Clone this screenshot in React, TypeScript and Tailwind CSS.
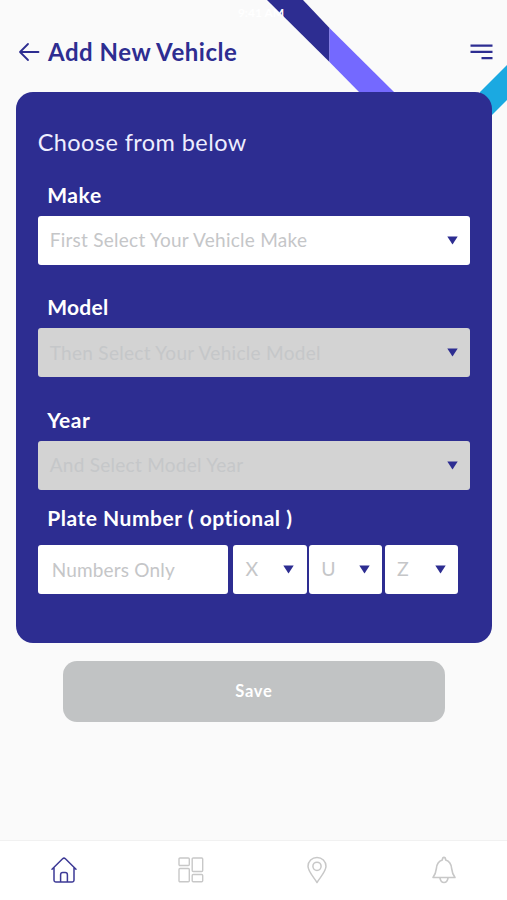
import React from "react";

function Caret() {
  return (
    <svg width="11" height="9" viewBox="0 0 11 9" className="shrink-0">
      <path d="M0.3 0.4H10.7L5.5 8.6Z" fill="#2d2d91" />
    </svg>
  );
}

function Field({ label, text, disabled, spacing, labelSpacing }: { label: string; text: string; disabled?: boolean; spacing: string; labelSpacing: string }) {
  return (
    <div className="h-[112.4px]">
      <div className={`ml-[9.5px] h-[34px] text-[21px] leading-[26px] font-bold text-white ${labelSpacing}`}>
        <span>{label}</span>
      </div>
      <div
        className={`flex h-[49px] items-center justify-between rounded-[3px] pr-3 pl-3 text-[19px] ${
          disabled ? "bg-[#d3d3d3] text-[#c5c7c9]" : "bg-white text-[#c5c6c8]"
        }`}
      >
        <span className={spacing}>{text}</span>
        <Caret />
      </div>
    </div>
  );
}

function Letter({ value }: { value: string }) {
  return (
    <div className="flex h-[49px] w-[73.2px] items-center justify-between rounded-[3px] bg-white pr-[12.5px] pl-[12px] text-[19.5px] text-[#c5c6c8]">
      <span className="pb-[3px]">{value}</span>
      <Caret />
    </div>
  );
}

export default function App() {
  return (
    <div className="relative flex h-[900px] w-[507px] flex-col overflow-hidden bg-[#fafafa] font-['Lato',sans-serif]">
      <svg width="507" height="120" className="absolute top-0 left-0">
        <path d="M267 0H303L329.5 28V62Z" fill="#2d2d91" />
        <path d="M329.5 28L395 93H360L329.5 62Z" fill="#7469ff" />
        <path d="M507 65L480 92V127L507 100Z" fill="#1ba9e1" />
      </svg>

      <div className="relative flex h-[26px] shrink-0 items-center justify-between px-4 text-[12px] font-bold text-white">
        <span className="w-[65px]" />
        <span className="mr-[26px]">9:41 AM</span>
        <span className="w-[24px]" />
      </div>

      <header className="relative flex h-[65.5px] shrink-0 items-start justify-between pr-[14.5px] pl-[18px]">
        <div className="flex h-[52px] items-center">
          <svg width="22" height="20" viewBox="0 0 22 20" fill="none" stroke="#2d2d91" strokeWidth="1.8" strokeLinecap="round" strokeLinejoin="round">
            <path d="M10 2L2 10L10 18M2 10H20.5" />
          </svg>
          <h1 className="ml-2 text-[24px] font-bold tracking-[0.52px] text-[#2d2d91]">Add New Vehicle</h1>
        </div>
        <svg width="23" height="16" viewBox="0 0 23 16" className="mt-[18px]" fill="#2d2d91">
          <path d="M0.5 0.5H22.5V2.7H0.5ZM0.5 6.8H22.5V9H0.5ZM11.5 13H22.5V15.2H11.5Z" />
        </svg>
      </header>

      <main className="relative ml-[15.7px] h-[551px] w-[476.5px] shrink-0 rounded-[17px] bg-[#2d2d91] px-[22px] pt-[34.5px]">
        <h2 className="h-[56px] text-[23.5px] leading-[32px] tracking-[0.42px] text-[#eeeeff]">Choose from below</h2>
        <Field label="Make" text="First Select Your Vehicle Make" spacing="tracking-[0.26px]" labelSpacing="tracking-[0.6px]" />
        <Field label="Model" text="Then Select Your Vehicle Model" disabled spacing="tracking-[0.3px]" labelSpacing="tracking-[0.3px]" />
        <Field label="Year" text="And Select Model Year" disabled spacing="tracking-[0.27px]" labelSpacing="tracking-[0.6px]" />
        <div className="-mt-[14.5px] ml-[9.5px] h-[40.5px] text-[21px] leading-[26px] font-bold tracking-[0.52px] text-white">
          <span>Plate Number ( optional )</span>
        </div>
        <div className="flex">
          <div className="mr-[5px] flex h-[49px] w-[190.8px] shrink-0 items-center rounded-[3px] bg-white pt-[2px] pl-[14px] text-[19px] tracking-[0.18px] text-[#c5c6c8]">
            <span>Numbers Only</span>
          </div>
          <div className="flex gap-[2.6px]">
            <Letter value="X" />
            <Letter value="U" />
            <Letter value="Z" />
          </div>
        </div>
      </main>

      <button className="mt-[18px] ml-[63.3px] h-[61px] w-[381.3px] shrink-0 rounded-[14px] bg-[#c1c3c4] text-[16.5px] font-bold tracking-[0.7px] text-white">
        <span>Save</span>
      </button>

      <nav className="mt-auto flex h-[60px] items-center justify-around border-t border-[#f1f1f1] bg-white pb-px pl-px">
        <svg width="28" height="28" viewBox="0 0 28 28" fill="none" stroke="#3d3a96" strokeWidth="1.5" strokeLinejoin="round" strokeLinecap="round">
          <path d="M2 13.3L12.6 2.8Q14 1.5 15.4 2.8L26 13.3M4 11.7V24.3Q4 26 5.7 26H22.3Q24 26 24 24.3V11.7M10.6 26V18.7Q10.6 16.5 12.8 16.5H15.2Q17.4 16.5 17.4 18.7V26" />
        </svg>
        <svg width="28" height="28" viewBox="0 0 28 28" fill="none" stroke="#c8c8c8" strokeWidth="1.4">
          <rect x="2" y="2" width="10.3" height="7.5" rx="1" />
          <rect x="15.2" y="2" width="10.5" height="13.5" rx="1" />
          <rect x="2" y="12.5" width="10.3" height="13.3" rx="1" />
          <rect x="15.2" y="18.5" width="10.5" height="7.3" rx="1" />
        </svg>
        <svg width="28" height="28" viewBox="0 0 28 28" fill="none" stroke="#c8c8c8" strokeWidth="1.5" strokeLinejoin="round">
          <path d="M14 26.5C11 21.5 5 15.5 5 10.3A9 8.9 0 0 1 23 10.3C23 15.5 17 21.5 14 26.5Z" />
          <circle cx="14" cy="10.3" r="4.1" />
        </svg>
        <svg width="28" height="28" viewBox="0 0 28 28" fill="none" stroke="#c8c8c8" strokeWidth="1.6" strokeLinejoin="round">
          <path d="M3 21.5C5.5 18 6 16 6.4 12.3C6.8 7.5 8.5 5.3 12.3 4Q12.5 1.4 14 1.4Q15.5 1.4 15.7 4C19.5 5.3 21.2 7.5 21.6 12.3C22 16 22.5 18 25 21.5ZM10 22.2Q10.7 26.5 14 26.5Q17.3 26.5 18 22.2" />
        </svg>
      </nav>
    </div>
  );
}
